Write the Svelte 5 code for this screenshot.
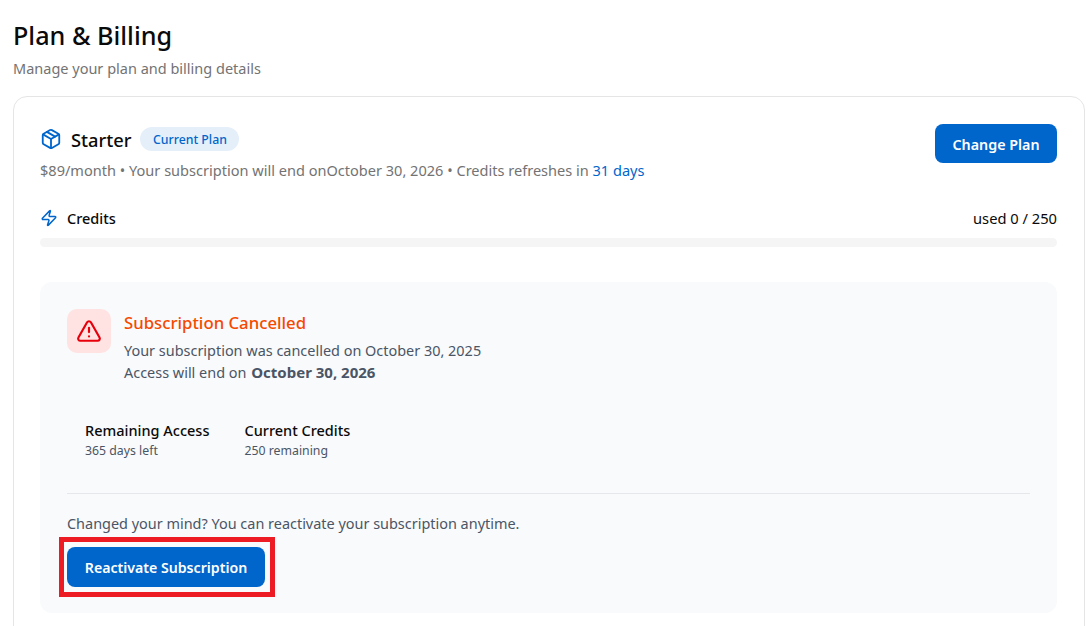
<script>
  const stats = [
    { label: 'Remaining Access', value: '365 days left' },
    { label: 'Current Credits', value: '250 remaining' }
  ];
</script>

<main class="page">
  <h1>Plan &amp; Billing</h1>
  <p class="sub">Manage your plan and billing details</p>

  <section class="card">
    <div class="plan-row">
      <div>
        <div class="plan-title">
          <svg class="box" viewBox="0 0 24 24" fill="none" stroke="#0066cc" stroke-width="2" stroke-linecap="round" stroke-linejoin="round">
            <path d="M21 8a2 2 0 0 0-1-1.73l-7-4a2 2 0 0 0-2 0l-7 4A2 2 0 0 0 3 8v8a2 2 0 0 0 1 1.73l7 4a2 2 0 0 0 2 0l7-4A2 2 0 0 0 21 16Z"/>
            <path d="m3.3 7 8.7 5 8.7-5"/><path d="M12 22V12"/><path d="m7.5 4.27 9 5.15"/>
          </svg>
          <span class="name">Starter</span>
          <span class="badge">Current Plan</span>
        </div>
        <p class="meta">$89/month • Your subscription will end onOctober 30, 2026 • Credits refreshes in <span class="link">31 days</span></p>
      </div>
      <button class="btn change">Change Plan</button>
    </div>

    <div class="credits-row">
      <div class="credits-label">
        <svg class="bolt" viewBox="0 0 24 24" fill="none" stroke="#0066cc" stroke-width="2" stroke-linecap="round" stroke-linejoin="round">
          <path d="M4 14a1 1 0 0 1-.78-1.63l9.9-10.2a.5.5 0 0 1 .86.46l-1.92 6.02A1 1 0 0 0 13 10h7a1 1 0 0 1 .78 1.63l-9.9 10.2a.5.5 0 0 1-.86-.46l1.92-6.02A1 1 0 0 0 11 14z"/>
        </svg>
        <span>Credits</span>
      </div>
      <span class="used">used 0 / 250</span>
    </div>
    <div class="track"></div>

    <div class="panel">
      <div class="notice">
        <div class="alert-icon">
          <svg viewBox="0 0 24 24" fill="none" stroke="#e7000b" stroke-width="2" stroke-linecap="round" stroke-linejoin="round">
            <path d="m21.73 18-8-14a2 2 0 0 0-3.48 0l-8 14A2 2 0 0 0 4 21h16a2 2 0 0 0 1.73-3"/>
            <path d="M12 9v4"/><path d="M12 17h.01"/>
          </svg>
        </div>
        <div>
          <h2>Subscription Cancelled</h2>
          <p class="line first">Your subscription was cancelled on October 30, 2025</p>
          <p class="line">Access will end on <strong>October 30, 2026</strong></p>
        </div>
      </div>

      <div class="stats">
        {#each stats as s}
          <div>
            <div class="stat-label">{s.label}</div>
            <div class="stat-value">{s.value}</div>
          </div>
        {/each}
      </div>

      <div class="foot">
        <p class="mind">Changed your mind? You can reactivate your subscription anytime.</p>
        <div class="action">
          <button class="btn reactivate">Reactivate Subscription</button>
          <span class="highlight"></span>
        </div>
      </div>
    </div>
  </section>
</main>

<style>
  :global(body) {
    margin: 0;
    background: #fff;
    overflow: hidden;
  }
  .page {
    height: 626px;
    overflow: hidden;
    padding: 19px 3px 0 13px;
    box-sizing: border-box;
    font-family: "Noto Sans", "Open Sans", sans-serif;
    color: #0a0a0a;
  }
  h1 {
    margin: 0;
    font-size: 25.2px;
    line-height: 32px;
    font-weight: 500;
  }
  .sub {
    margin: 5px 0 0;
    font-size: 14.5px;
    line-height: 24px;
    color: #737373;
  }
  .card {
    margin-top: 16px;
    border: 1px solid #e5e5e5;
    border-radius: 14px;
    padding: 27px 27px 40px 26px;
    background: #fff;
  }
  .plan-row {
    display: flex;
    justify-content: space-between;
    align-items: flex-start;
  }
  .plan-title {
    display: flex;
    align-items: center;
    height: 30px;
  }
  .box { width: 22px; height: 22px; margin-right: 9px; }
  .name { font-size: 18.3px; font-weight: 500; margin-right: 9px; }
  .badge {
    background: #e5eff9;
    color: #0066cc;
    border-radius: 12px;
    font-size: 12.3px;
    line-height: 23px;
    padding: 1px 12.5px 0;
    font-weight: 500;
  }
  .meta {
    margin: 6px 0 0;
    font-size: 14.55px;
    line-height: 20px;
    color: #737373;
  }
  .link { color: #0066cc; }
  .btn {
    background: #0066cc;
    color: #fff;
    border: 0;
    border-radius: 8px;
    font-family: inherit;
    font-size: 14.3px;
    font-weight: 600;
  }
  .change { width: 122px; height: 39px; padding-top: 2px; }
  .credits-row {
    display: flex;
    justify-content: space-between;
    align-items: center;
    margin-top: 28px;
    font-size: 14.5px;
    line-height: 20px;
  }
  .credits-label { display: flex; align-items: center; font-weight: 500; }
  .used { font-size: 14.7px; }
  .bolt { width: 18px; height: 18px; margin-right: 9px; }
  .track {
    height: 9px;
    margin-top: 10px;
    border-radius: 5px;
    background: #f5f5f5;
  }
  .panel {
    margin-top: 35px;
    background: #f9fafb;
    border-radius: 12px;
    padding: 27px 27px 26px;
  }
  .notice { display: flex; gap: 13px; align-items: flex-start; }
  .alert-icon {
    width: 44px;
    height: 44px;
    flex: none;
    background: #ffe2e2;
    border-radius: 10px;
    display: flex;
    align-items: center;
    justify-content: center;
  }
  .alert-icon svg { width: 26px; height: 26px; }
  h2 {
    margin: 0;
    font-size: 16.75px;
    line-height: 28px;
    font-weight: 500;
    color: #f54900;
  }
  .line {
    margin: 0;
    font-size: 14.45px;
    line-height: 22px;
    color: #4a5565;
  }
  .line.first { margin-top: 3px; }
  .line strong { font-weight: 700; font-size: 15px; line-height: 1; margin-left: 1px; }
  .stats {
    display: flex;
    gap: 35px;
    padding: 0 18px;
    margin-top: 36px;
  }
  .stat-label { font-size: 14.5px; line-height: 20px; font-weight: 500; }
  .stat-value { font-size: 12.3px; line-height: 20px; color: #4a5565; margin-top: 1px; }
  .foot {
    margin-top: 32px;
    border-top: 1px solid #e5e7eb;
    padding-top: 20px;
  }
  .mind { margin: 0; font-size: 14.45px; line-height: 20px; color: #4a5565; }
  .action {
    position: relative;
    width: fit-content;
    margin-top: 13px;
    display: flex;
  }
  .highlight {
    position: absolute;
    inset: -10px -10px -10px -8px;
    border: 5px solid #ed1c24;
    pointer-events: none;
  }
  .reactivate { width: 198px; height: 40px; font-size: 14.15px; }
</style>
